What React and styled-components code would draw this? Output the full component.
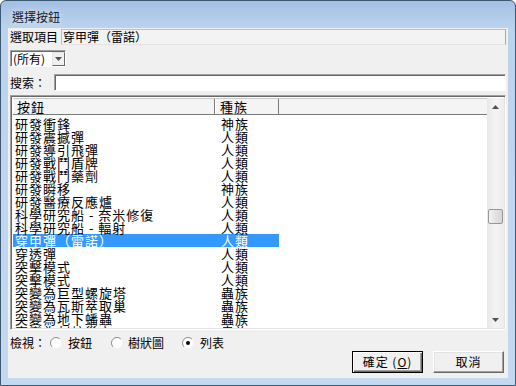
import React from "react";
import styled, { createGlobalStyle } from "styled-components";

const GlobalStyle = createGlobalStyle`
  html, body {
    margin: 0;
    padding: 0;
    background: #ffffff;
  }
  body {
    font-family: "Noto Sans CJK TC", "Noto Sans", sans-serif;
  }
`;

const Window = styled.div`
  box-sizing: border-box;
  width: 516px;
  height: 386px;
  display: flex;
  flex-direction: column;
  padding: 0 7px 7px 7px;
  border: 1px solid #3d5873;
  border-radius: 6px 6px 0 0;
  background: linear-gradient(180deg, #a3bfe2 0px, #bcd3ed 27px, #c4d8ef 100%);
  font-family: "Noto Sans CJK TC", sans-serif;
  color: #000;
`;

const TitleBar = styled.div`
  height: 27px;
  display: flex;
  align-items: flex-end;
  padding: 0 0 4px 4px;
  box-sizing: border-box;
`;

const Title = styled.div`
  font-size: 12px;
  line-height: 14px;
  color: #10202f;
  text-shadow: 0 0 6px rgba(255, 255, 255, 0.9);
`;

const Client = styled.div`
  flex: 1;
  display: flex;
  flex-direction: column;
  background: #f0f0f0;
  padding: 1px 2px 0 2px;
  font-size: 12px;
`;

const FieldRow = styled.div`
  display: flex;
  align-items: center;
  height: ${(p) => p.$h || 16}px;
  margin-top: ${(p) => p.$top || 0}px;
  gap: ${(p) => p.$gap || 4}px;
`;

const Label = styled.span`
  font-size: 12px;
  line-height: 14px;
  white-space: nowrap;
`;

const ReadField = styled.div`
  flex: 1;
  height: 16px;
  box-sizing: border-box;
  border: 1px solid #bdbdbd;
  border-right-color: #a8a8a8;
  border-bottom-color: #e2e2e2;
  background: #f3f3f3;
  line-height: 14px;
  padding-left: 1px;
  white-space: nowrap;
`;

const Combo = styled.div`
  width: 56px;
  height: 17px;
  box-sizing: border-box;
  margin-top: 5px;
  display: flex;
  border: 1px solid;
  border-color: #a0a0a0 #ffffff #ffffff #a0a0a0;
  box-shadow: inset 1px 1px #696969;
  background: #fff;
`;

const ComboText = styled.div`
  flex: 1;
  padding: 1px 0 0 2px;
  line-height: 14px;
  white-space: nowrap;
`;

const ComboButton = styled.div`
  width: 13px;
  margin: 1px 0 0 0;
  box-sizing: border-box;
  background: #f0f0f0;
  border: 1px solid;
  border-color: #e3e3e3 #696969 #696969 #e3e3e3;
  display: flex;
  align-items: center;
  justify-content: center;
`;

const TextBox = styled.div`
  flex: 1;
  height: 17px;
  box-sizing: border-box;
  border: 1px solid;
  border-color: #a0a0a0 #ffffff #ffffff #a0a0a0;
  box-shadow: inset 1px 1px #696969;
  background: #fff;
`;

const ListView = styled.div`
  margin-top: 4px;
  height: 235px;
  box-sizing: border-box;
  display: flex;
  border: 1px solid;
  border-color: #a0a0a0 #ffffff #ffffff #a0a0a0;
  box-shadow: inset 1px 1px #696969, inset -1px -1px #e3e3e3;
  padding: 2px 1px 1px 2px;
  background: #fff;
  overflow: hidden;
`;

const ListBody = styled.div`
  flex: 1;
  display: flex;
  flex-direction: column;
  overflow: hidden;
`;

const Header = styled.div`
  display: flex;
  height: 17px;
  flex-shrink: 0;
  box-sizing: border-box;
  background: #f4f4f4;
  border-top: 1px solid #c9c9c9;
  border-bottom: 1px solid #7a7a7a;
`;

const HeaderCell = styled.div`
  width: ${(p) => p.$w}px;
  box-sizing: border-box;
  border-right: 1px solid #7a7a7a;
  box-shadow: inset 1px 0 #ffffff;
  padding-left: ${(p) => p.$pad}px;
  font-size: 13px;
  letter-spacing: 1px;
  line-height: 15px;
  white-space: nowrap;
`;

const Rows = styled.div`
  flex: 1;
  overflow: hidden;
  padding-top: 2px;
`;

const Row = styled.div`
  display: grid;
  grid-template-columns: 202px 64px;
  width: 266px;
  height: 13px;
  font-size: 13px;
  letter-spacing: 1px;
  line-height: 13px;
  white-space: nowrap;
  background: ${(p) => (p.$selected ? "#3399ff" : "transparent")};
  color: ${(p) => (p.$selected ? "#ffffff" : "#000000")};
`;

const Cell = styled.div`
  padding-left: ${(p) => p.$pad}px;
`;

const ScrollBar = styled.div`
  width: 17px;
  display: flex;
  flex-direction: column;
  background: linear-gradient(90deg, #e8e8e8, #f4f4f4 50%, #ececec);
`;

const ScrollArrow = styled.div`
  height: 17px;
  display: flex;
  align-items: center;
  justify-content: center;
`;

const ScrollTrack = styled.div`
  flex: 1;
  position: relative;
`;

const Thumb = styled.div`
  position: absolute;
  left: 1px;
  top: 94px;
  width: 15px;
  height: 15px;
  box-sizing: border-box;
  border: 1px solid #979797;
  border-radius: 2px;
  background: linear-gradient(90deg, #f2f2f2, #e2e2e2 50%, #d6d6d6);
`;

const ViewRow = styled.div`
  display: flex;
  align-items: center;
  height: 16px;
  margin-top: 5px;
`;

const RadioItem = styled.div`
  display: flex;
  align-items: center;
  gap: ${(p) => p.$gap}px;
  margin-left: ${(p) => p.$left}px;
`;

const ButtonRow = styled.div`
  display: flex;
  justify-content: flex-end;
  gap: 10px;
  padding-right: 2px;
`;

const Button = styled.div`
  width: 71px;
  height: 22px;
  box-sizing: border-box;
  display: flex;
  align-items: center;
  justify-content: center;
  background: #f0f0f0;
  border: 1px solid;
  border-color: ${(p) => (p.$default ? "#000000" : "#ffffff #696969 #696969 #ffffff")};
  box-shadow: ${(p) =>
    p.$default
      ? "inset 1px 1px #ffffff, inset -1px -1px #696969, inset -2px -2px #a0a0a0"
      : "inset -1px -1px #a0a0a0, inset 1px 1px #e3e3e3"};
  font-size: 12px;
  line-height: 14px;
  letter-spacing: 1px;
`;

const items = [
  ["研發衝鋒", "神族"],
  ["研發震撼彈", "人類"],
  ["研發導引飛彈", "人類"],
  ["研發戰鬥盾牌", "人類"],
  ["研發戰鬥藥劑", "人類"],
  ["研發瞬移", "神族"],
  ["研發醫療反應爐", "人類"],
  ["科學研究船 - 奈米修復", "人類"],
  ["科學研究船 - 輻射", "人類"],
  ["穿甲彈（雷諾）", "人類", true],
  ["穿透彈", "人類"],
  ["突擊模式", "人類"],
  ["突擊模式", "人類"],
  ["突變為巨型螺旋塔", "蟲族"],
  ["突變為瓦斯萃取巢", "蟲族"],
  ["突變為地下蟠蟲", "蟲族"],
  ["突變為刺蛇巢穴", "蟲族"],
];

const Radio = ({ checked }) => (
  <svg width="12" height="12" viewBox="0 0 12 12">
    <circle cx="6" cy="6" r="5.5" fill="#ffffff" />
    <path d="M9.9 2.1 A5.5 5.5 0 0 0 2.1 9.9" stroke="#8a8a8a" strokeWidth="1" fill="none" />
    <path d="M9.9 2.1 A5.5 5.5 0 0 1 2.1 9.9" stroke="#f4f4f4" strokeWidth="1" fill="none" />
    {checked && <circle cx="6" cy="6" r="2" fill="#000000" />}
  </svg>
);

const Triangle = ({ down }) => (
  <svg width="7" height="4" viewBox="0 0 7 4">
    <path d={down ? "M0 0 H7 L3.5 4 Z" : "M0 4 H7 L3.5 0 Z"} fill="#505050" />
  </svg>
);

const App = () => {
  return (
    <>
      <GlobalStyle />
      <Window>
        <TitleBar>
          <Title>選擇按鈕</Title>
        </TitleBar>
        <Client>
          <FieldRow $gap={3}>
            <Label>選取項目</Label>
            <ReadField>穿甲彈（雷諾）</ReadField>
          </FieldRow>
          <Combo>
            <ComboText>(所有)</ComboText>
            <ComboButton>
              <Triangle down />
            </ComboButton>
          </Combo>
          <FieldRow $top={7} $h={17} $gap={8}>
            <Label>搜索：</Label>
            <TextBox />
          </FieldRow>
          <ListView>
            <ListBody>
              <Header>
                <HeaderCell $w={202} $pad={4}>按鈕</HeaderCell>
                <HeaderCell $w={64} $pad={5}>種族</HeaderCell>
              </Header>
              <Rows>
                {items.map(([name, race, selected], i) => (
                  <Row key={i} $selected={selected}>
                    <Cell $pad={2}>{name}</Cell>
                    <Cell $pad={6}>{race}</Cell>
                  </Row>
                ))}
              </Rows>
            </ListBody>
            <ScrollBar>
              <ScrollArrow>
                <Triangle />
              </ScrollArrow>
              <ScrollTrack>
                <Thumb />
              </ScrollTrack>
              <ScrollArrow>
                <Triangle down />
              </ScrollArrow>
            </ScrollBar>
          </ListView>
          <ViewRow>
            <Label>檢視：</Label>
            <RadioItem $left={4} $gap={6}>
              <Radio />
              <Label>按鈕</Label>
            </RadioItem>
            <RadioItem $left={19} $gap={5}>
              <Radio />
              <Label>樹狀圖</Label>
            </RadioItem>
            <RadioItem $left={18} $gap={6}>
              <Radio checked />
              <Label>列表</Label>
            </RadioItem>
          </ViewRow>
          <ButtonRow>
            <Button $default>
              確定 (<u>O</u>)
            </Button>
            <Button>取消</Button>
          </ButtonRow>
        </Client>
      </Window>
    </>
  );
};

export default App;
